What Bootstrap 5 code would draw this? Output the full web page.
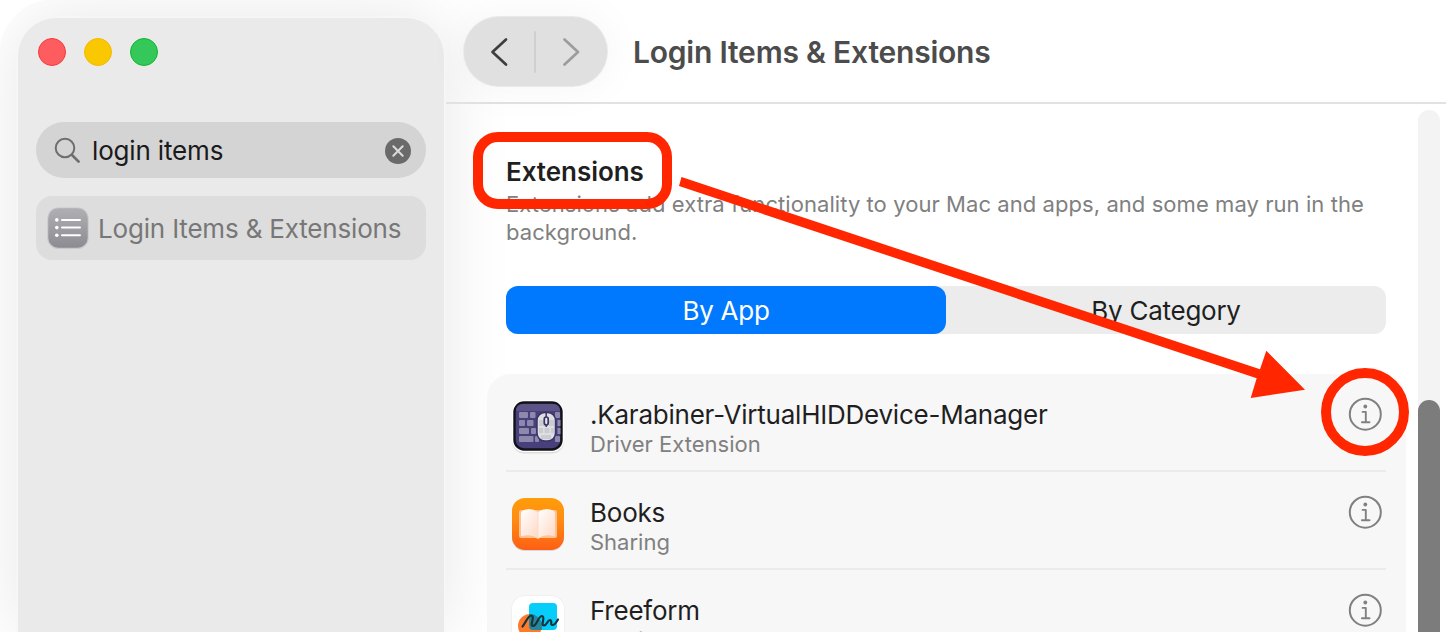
<!DOCTYPE html>
<html lang="en">
<head>
<meta charset="utf-8">
<meta name="viewport" content="width=device-width, initial-scale=1">
<title>Login Items &amp; Extensions</title>
<link href="https://cdn.jsdelivr.net/npm/bootstrap@5.3.0/dist/css/bootstrap.min.css" rel="stylesheet">
<style>
  body { font-family: Inter, "Liberation Sans", sans-serif; color: #1f1f1f; background: #fff; }
  svg { display: block; flex: none; }
  .window { height: 632px; border-radius: 56px 0 0 0; background: #fff; box-shadow: 0 0 3px rgba(0,0,0,.06); }
  .sidebar { width: 426px; margin: 18px 0 0 18px; padding: 20px 18px 0; background: #eaeaea; border-radius: 38px 38px 0 0; box-shadow: 0 0 0 1.5px #f7f7f7, 0 0 70px rgba(0,0,0,.1); flex: none; }
  .lights { gap: 18px; padding-left: 2px; }
  .light { width: 28px; height: 28px; border-radius: 50%; border: 1px solid; }
  .light-close { background: #ff5c5f; border-color: #f5393d; }
  .light-min { background: #fac800; border-color: #f2b900; }
  .light-zoom { background: #34c759; border-color: #10b62f; }
  .search { height: 56px; margin-top: 56px; padding: 0 15px 0 18px; background: #d4d4d4; font-size: 26px; color: #1a1a1a; letter-spacing: -.16px; }
  .search-text { margin-left: 11px; padding-top: 1px; }
  .result { height: 64px; margin-top: 18px; padding-left: 10px; background: #ddd; border-radius: 16px; font-size: 26px; letter-spacing: -.18px; color: #777; white-space: nowrap; }
  .result-text { margin-left: 8px; }
  .content-pane { position: relative; margin-left: 2px; min-width: 0; }
  .toolbar { height: 104px; padding: 1px 0 0 18px; border-bottom: 2px solid #e2e2e2; }
  .nav-pill { width: 143px; height: 69px; border-radius: 35px; background: #e0e0e0; box-shadow: 0 0 0 1px #e9e9e9, 0 0 40px 6px rgba(0,0,0,.035); }
  .page-title { font-size: 30px; font-weight: 600; color: #4c4c4c; letter-spacing: -.21px; margin: 1px 0 0 26px; white-space: nowrap; }
  .page-body { padding: 50px 60px 0; width: 1000px; }
  .section-title { font-size: 26px; line-height: 36px; font-weight: 600; margin: 0; letter-spacing: -.05px; }
  .section-note { font-size: 22px; line-height: 28px; color: #808080; letter-spacing: .065px; margin: 0; white-space: nowrap; }
  .segmented { height: 48px; margin-top: 40px; border-radius: 12px; background: #ececec; font-size: 26px; }
  .segmented button { flex: 1; border: 0; padding: 0; background: none; border-radius: 12px; color: #1f1f1f; letter-spacing: -.27px; }
  .segmented .active { background: #0079ff; color: #fff; }
  .ext-list { margin: 40px -20px 0 -19px; padding: 0 20px 0 19px; background: #f7f7f7; border-radius: 24px 24px 0 0; height: 258px; overflow: hidden; }
  .ext-row { height: 98px; border-bottom: 2px solid #ebebeb; }
  .ext-row .app-icon { margin-top: 20px; }
  .ext-text { padding: 25px 0 0 20px; }
  .ext-name { font-size: 26px; line-height: 32px; letter-spacing: -.23px; white-space: nowrap; }
  .ext-kind { font-size: 22px; line-height: 28px; margin-top: -1px; color: #808080; }
  .info { margin: 23px 4px 0 0; }
  .scroll-track { position: absolute; left: 972px; top: 110px; width: 22px; height: 522px; background: #f3f3f3; border-radius: 11px 11px 0 0; }
  .scroll-thumb { margin-top: 290px; height: 232px; background: #7c7c7c; border-radius: 11px 11px 0 0; }
  .markup { position: absolute; left: 0; top: 0; pointer-events: none; }
</style>
</head>
<body class="overflow-hidden">
<div class="window d-flex position-relative overflow-hidden">
  <aside class="sidebar">
    <div class="lights d-flex">
      <span class="light light-close"></span><span class="light light-min"></span><span class="light light-zoom"></span>
    </div>
    <div class="search d-flex align-items-center rounded-pill">
      <svg width="27" height="27" viewBox="0 0 27 27" fill="none" stroke="#6e6e6e" stroke-linecap="round"><circle cx="11" cy="11" r="9.3" stroke-width="2"/><path d="M18 18l6.600 6.600" stroke-width="2.700"/></svg>
      <span class="search-text flex-grow-1">login items</span>
      <svg width="26" height="26" viewBox="0 0 26 26" style="margin-top:2px"><circle cx="13" cy="13" r="13" fill="#6a6a6a"/><path d="M8.300 8.300l9.400 9.400M17.700 8.300l-9.400 9.400" stroke="#dcdcdc" stroke-width="2" stroke-linecap="round"/></svg>
    </div>
    <div class="result d-flex align-items-center">
      <svg width="44" height="44" viewBox="0 0 44 44"><defs><linearGradient id="g" x2="0" y2="1"><stop stop-color="#b0b0b4"/><stop offset="1" stop-color="#8b8b91"/></linearGradient></defs><rect x="1.300" y="1.500" width="41.400" height="41.500" rx="11" fill="#c8c8ca"/><rect x="2.300" y="2.300" width="39.400" height="39.400" rx="10" fill="url(#g)"/><g fill="#fff"><circle cx="10.800" cy="13.900" r="1.800"/><circle cx="10.800" cy="21.600" r="1.800"/><circle cx="10.800" cy="29.300" r="1.800"/></g><path d="M16 13.900h18M16 21.600h18M16 29.300h18" stroke="#fff" stroke-width="2" stroke-linecap="round"/></svg>
      <span class="result-text">Login Items &amp; Extensions</span>
    </div>
  </aside>
  <main class="content-pane flex-grow-1">
    <header class="toolbar d-flex align-items-center">
      <div class="nav-pill flex-shrink-0">
        <svg width="143" height="69" viewBox="0 0 143 69" fill="none" stroke-linecap="round" stroke-linejoin="round"><path d="M42 22.500L28.500 35 42 47.500" stroke="#3e3e3e" stroke-width="2.700"/><path d="M71 15v40" stroke="#d0d0d0" stroke-width="2"/><path d="M100.500 22.500L114 35l-13.500 12.500" stroke="#9c9c9c" stroke-width="2.700"/></svg>
      </div>
      <h1 class="page-title">Login Items &amp; Extensions</h1>
    </header>
    <section class="page-body">
      <h2 class="section-title">Extensions</h2>
      <p class="section-note">Extensions add extra functionality to your Mac and apps, and some may run in the<br>background.</p>
      <div class="segmented d-flex"><button class="active">By App</button><button>By Category</button></div>
      <div class="ext-list">
        <div class="ext-row d-flex">
          <svg class="app-icon" width="64" height="64" viewBox="0 0 64 64"><rect x="6" y="6.500" width="52" height="53" rx="12" fill="#dedede"/><rect x="6" y="6" width="52" height="52" rx="12" fill="#fff"/><rect x="8.500" y="8.500" width="47" height="47" rx="9.500" fill="#48407a" stroke="#121218" stroke-width="2.400"/><path d="M10 17q0-7 7-7h30q7 0 7 7z" fill="#5c5486"/><g fill="#8e89ac"><rect x="13" y="18" width="9" height="6" rx="1"/><rect x="24" y="18" width="5.500" height="6" rx="1"/><rect x="49" y="18" width="5" height="6" rx="1"/><rect x="13" y="26" width="6" height="6" rx="1"/><rect x="21" y="26" width="6.500" height="6" rx="1"/><rect x="51.500" y="26" width="3" height="6"/><rect x="13" y="34" width="10" height="6" rx="1"/><rect x="25" y="34" width="5" height="6" rx="1"/><rect x="51.500" y="34" width="3" height="6"/><rect x="13" y="42" width="14.500" height="6" rx="1"/><rect x="29" y="42" width="4" height="6" rx="1"/><rect x="49" y="42" width="5" height="6" rx="1"/></g><rect x="31" y="18.500" width="18.500" height="28.500" rx="8" fill="#dfdfe2" stroke="#3b3468" stroke-width="1.500"/><g fill="#cbcbd1"><path d="M33 26h5v6h-5zM43 26h5v6h-5zM33 34h4v5h-4zM38.500 34h5v5h-5zM45 34h3v5h-3zM35 41h10v4H35z"/></g><path d="M40.200 19v14" stroke="#3b3468" stroke-width="1.500"/><rect x="38.300" y="23" width="3.900" height="8" rx="1.950" fill="#e6e6ea" stroke="#3b3468" stroke-width="1.700"/></svg>
          <div class="ext-text flex-grow-1"><div class="ext-name">.Karabiner-VirtualHIDDevice-Manager</div><div class="ext-kind">Driver Extension</div></div>
          <svg class="info" width="34" height="34" viewBox="0 0 34 34" fill="none" stroke="#808080"><circle cx="17.300" cy="17.200" r="15.500" stroke-width="2"/><circle cx="17.300" cy="9.500" r="1.900" fill="#808080" stroke="none"/><path d="M14.600 14.900h3.200v10M13.900 25.300h7.600" stroke-width="1.900" stroke-linecap="round" stroke-linejoin="round"/></svg>
        </div>
        <div class="ext-row d-flex">
          <svg class="app-icon" width="64" height="64" viewBox="0 0 64 64"><defs><linearGradient id="b" x2="0" y2="1"><stop stop-color="#ff9d0a"/><stop offset=".4" stop-color="#ff8d12"/><stop offset="1" stop-color="#fd5f14"/></linearGradient><linearGradient id="p" x2="1" y2="1"><stop stop-color="#fff"/><stop offset="1" stop-color="#ffd8c5"/></linearGradient></defs><rect x="6" y="7" width="52" height="52" rx="13" fill="#d9d9d9"/><rect x="6" y="6" width="52" height="52" rx="13" fill="url(#b)"/><path d="M13 20q0-2 2-2h34q2 0 2 2v24q0 2-2 2H34l-2 1-2-1H15q-2 0-2-2z" fill="#ffc092"/><path d="M32 20q-8-5.500-15.500-1.200-1.500.8-1.500 3V43q0 1.500 1.500 1.200Q25 41.500 32 46.500z" fill="url(#p)"/><path d="M32 20q8-5.500 15.500-1.200 1.500.8 1.500 3V43q0 1.500-1.500 1.200Q39 41.500 32 46.500z" fill="url(#p)"/><path d="M32 20v26" stroke="#ffd9c6"/></svg>
          <div class="ext-text flex-grow-1"><div class="ext-name">Books</div><div class="ext-kind">Sharing</div></div>
          <svg class="info" width="34" height="34" viewBox="0 0 34 34" fill="none" stroke="#808080"><circle cx="17.300" cy="17.200" r="15.500" stroke-width="2"/><circle cx="17.300" cy="9.500" r="1.900" fill="#808080" stroke="none"/><path d="M14.600 14.900h3.200v10M13.900 25.300h7.600" stroke-width="1.900" stroke-linecap="round" stroke-linejoin="round"/></svg>
        </div>
        <div class="ext-row d-flex">
          <svg class="app-icon" width="64" height="64" viewBox="0 0 64 64"><rect x="5.500" y="5.500" width="53" height="54" rx="13" fill="#ebebeb"/><rect x="6" y="6" width="52" height="52" rx="12.500" fill="#fff"/><circle cx="24" cy="36" r="12" fill="#ff7a29"/><rect x="23" y="13" width="28" height="27" rx="4" fill="#06cdf9"/><path d="M23 24a12 12 0 0 1 13 12v4h-9q-4 0-4-4z" fill="#26869a"/><path d="M16.500 36.500c3-3 5-11 9-11 4 1-2.500 10.500 1.500 10.500s5-10 9-10c4 1-2 9.500 2 9.500 3 0 3.500-5.500 6-5.500 3 1-.5 5 2.500 5 2.500 0 4-3 5.500-5.500" fill="none" stroke="#17333d" stroke-width="2.200" stroke-linecap="round"/></svg>
          <div class="ext-text flex-grow-1"><div class="ext-name">Freeform</div><div class="ext-kind">Sharing</div></div>
          <svg class="info" width="34" height="34" viewBox="0 0 34 34" fill="none" stroke="#808080"><circle cx="17.300" cy="17.200" r="15.500" stroke-width="2"/><circle cx="17.300" cy="9.500" r="1.900" fill="#808080" stroke="none"/><path d="M14.600 14.900h3.200v10M13.900 25.300h7.600" stroke-width="1.900" stroke-linecap="round" stroke-linejoin="round"/></svg>
        </div>
      </div>
    </section>
    <div class="scroll-track"><div class="scroll-thumb"></div></div>
  </main>
  <svg class="markup" width="1446" height="632" viewBox="0 0 1446 632"><rect x="478" y="137" width="189" height="67" rx="20" fill="none" stroke="#ff2600" stroke-width="10"/><path d="M681.500 177L1260 369.300 1266.300 350.700 1305 389.700 1250.700 398 1256.700 378.300 679 186z" fill="#ff2600"/><circle cx="1365" cy="412" r="39" fill="none" stroke="#ff2600" stroke-width="10"/></svg>
</div>
<script src="https://cdn.jsdelivr.net/npm/bootstrap@5.3.0/dist/js/bootstrap.bundle.min.js"></script>
</body>
</html>
